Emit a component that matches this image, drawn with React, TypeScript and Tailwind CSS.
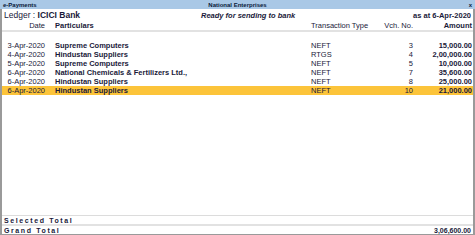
import React from "react";

const rows = [
  { date: "3-Apr-2020", part: "Supreme Computers", type: "NEFT", vch: "3", amt: "15,000.00" },
  { date: "4-Apr-2020", part: "Hindustan Suppliers", type: "RTGS", vch: "4", amt: "2,00,000.00" },
  { date: "5-Apr-2020", part: "Supreme Computers", type: "NEFT", vch: "5", amt: "10,000.00" },
  { date: "6-Apr-2020", part: "National Chemicals & Fertilizers Ltd.,", type: "NEFT", vch: "7", amt: "35,600.00" },
  { date: "6-Apr-2020", part: "Hindustan Suppliers", type: "NEFT", vch: "8", amt: "25,000.00" },
  { date: "6-Apr-2020", part: "Hindustan Suppliers", type: "NEFT", vch: "10", amt: "21,000.00", sel: true },
];

export default function App() {
  return (
    <div
      className="w-[475px] h-[235px] bg-white flex flex-col text-[#1a1a3a] overflow-hidden"
      style={{ fontFamily: '"Liberation Sans", Arial, sans-serif' }}
    >
      <div className="h-[9px] bg-[#a9c8e6] flex items-center px-[3px] text-[6px] font-bold text-[#0a1a3a] leading-none">
        <span className="flex-1">e-Payments</span>
        <span className="flex-1 text-center">National Enterprises</span>
        <span className="flex-1 text-right">x</span>
      </div>
      <div className="flex-1 flex flex-col border-l-2 border-r-2 border-b border-[#9a9a9a]">
        <div className="h-[13px] flex items-center px-[2px] leading-none">
          <span className="w-[197px] text-[8.5px]">
            Ledger : <span className="font-bold">ICICI Bank</span>
          </span>
          <span className="text-[7.5px] font-bold italic">Ready for sending to bank</span>
          <span className="flex-1 text-right text-[7.5px] font-bold">as at 6-Apr-2020</span>
        </div>
        <div className="h-[10px] flex items-center text-[7.5px] leading-none border-b-2 border-[#e2e2e2]">
          <span className="w-[43px] text-right">Date</span>
          <span className="ml-[10px] w-[256px] font-bold">Particulars</span>
          <span className="w-[60px]">Transaction Type</span>
          <span className="w-[42px] text-right">Vch. No.</span>
          <span className="flex-1 text-right font-bold pr-[1px]">Amount</span>
        </div>
        <div className="h-[9px]" />
        {rows.map((r, i) => (
          <div
            key={i}
            className={`h-[9px] flex items-center text-[7.5px] leading-none ${r.sel ? "bg-[#fcc43a]" : ""}`}
          >
            <span className="w-[43px] text-right">{r.date}</span>
            <span className="ml-[10px] w-[256px] font-bold">{r.part}</span>
            <span className="w-[60px]">{r.type}</span>
            <span className="w-[42px] text-right">{r.vch}</span>
            <span className="flex-1 text-right font-bold pr-[1px]">{r.amt}</span>
          </div>
        ))}
        <div className="flex-1" />
        <div className="h-[9px] flex items-center border-t border-[#dcdcdc] px-[2px] text-[7px] font-bold tracking-[1.6px] leading-none">
          Selected Total
        </div>
        <div className="h-[10px] flex items-center border-t-2 border-[#e2e2e2] px-[2px] text-[7px] font-bold leading-none">
          <span className="flex-1 tracking-[1.6px]">Grand Total</span>
          <span>3,06,600.00</span>
        </div>
      </div>
    </div>
  );
}
